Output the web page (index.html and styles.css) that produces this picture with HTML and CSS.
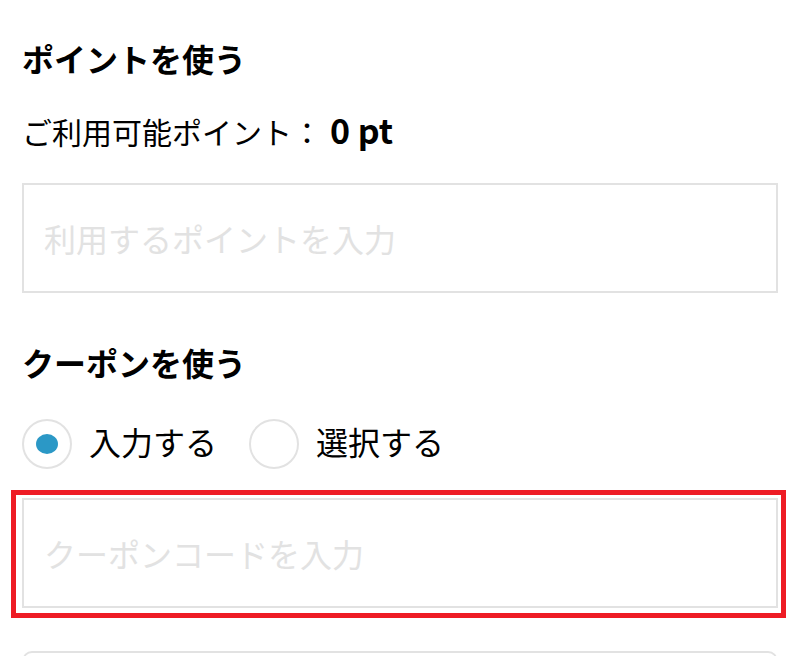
FILE: index.html
```html
<!DOCTYPE html>
<html lang="ja">

<head>
    <meta charset="UTF-8">
    <meta name="viewport" content="width=device-width, initial-scale=1.0">
    <title>ポイント・クーポン</title>
    <link rel="stylesheet" href="styles.css">
</head>

<body>
    <div class="payment-form">
        <section class="point-section">
            <h2>ポイントを使う</h2>
            <p class="point-balance">ご利用可能ポイント：<strong>0 pt</strong></p>
            <input type="text" class="text-input" placeholder="利用するポイントを入力">
        </section>

        <section class="coupon-section">
            <h2>クーポンを使う</h2>
            <div class="radio-group">
                <label class="radio">
                    <input type="radio" name="coupon-mode" checked>
                    <span class="radio-mark"></span>
                    入力する
                </label>
                <label class="radio">
                    <input type="radio" name="coupon-mode">
                    <span class="radio-mark"></span>
                    選択する
                </label>
            </div>
            <div class="highlight">
                <input type="text" class="text-input" placeholder="クーポンコードを入力">
            </div>
            <div class="next-box"></div>
        </section>
    </div>
</body>

</html>
```

FILE: styles.css
```css
body {
    font-family: "Noto Sans CJK JP", "Noto Sans", sans-serif;
    margin: 0;
    padding: 0;
    background-color: #fff;
    color: #000;
}

.payment-form {
    padding: 34px 21px 0 22px;
}

h2 {
    margin: 0;
    font-size: 32px;
    line-height: 48px;
    font-weight: bold;
}

.point-balance {
    margin: 25px 0 29px;
    font-size: 30px;
    line-height: 45px;
}

.point-balance strong {
    margin-left: 8px;
    font-size: 34px;
}

.text-input {
    display: block;
    box-sizing: border-box;
    width: 100%;
    height: 110px;
    margin: 0;
    padding: 0 20px;
    border: 2px solid #e2e2e2;
    border-radius: 0;
    font-family: inherit;
    font-size: 32px;
    outline: none;
}

.text-input::placeholder {
    color: #e2e2e2;
}

.coupon-section {
    margin-top: 45px;
}

.radio-group {
    display: flex;
    gap: 32px;
    margin-top: 33px;
}

.radio {
    display: flex;
    align-items: flex-start;
    gap: 17px;
    font-size: 32px;
    line-height: 44px;
    cursor: pointer;
}

.radio input {
    display: none;
}

.radio-mark {
    box-sizing: border-box;
    width: 50px;
    height: 50px;
    border: 2px solid #e2e2e2;
    border-radius: 50%;
    display: flex;
    align-items: center;
    justify-content: center;
}

.radio input:checked + .radio-mark::after {
    content: "";
    width: 22px;
    height: 20px;
    border-radius: 50%;
    background-color: #2b98c6;
}

.highlight {
    margin: 21px -8px 0 -11px;
    padding: 3px 3px 5px 6px;
    border: 5px solid #ee1c25;
}

.next-box {
    margin-top: 33px;
    height: 40px;
    border: 2px solid #e2e2e2;
    border-radius: 10px;
}
```
